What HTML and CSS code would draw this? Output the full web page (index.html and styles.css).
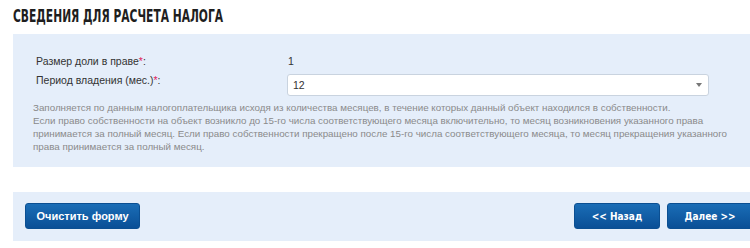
FILE: index.html
```html
<!DOCTYPE html>
<html lang="ru">
<head>
    <meta charset="UTF-8">
    <title>Сведения для расчета налога</title>
    <link rel="stylesheet" href="styles.css">
</head>
<body>
    <div class="page">
        <h1 class="title">Сведения для расчета налога</h1>

        <!-- Tax calculation details -->
        <div class="panel form-panel">
            <div class="row">
                <div class="label">Размер доли в праве<span class="req">*</span>:</div>
                <div class="value">1</div>
            </div>
            <div class="row">
                <div class="label label-select">Период владения (мес.)<span class="req">*</span>:</div>
                <div class="select">
                    <span>12</span>
                    <span class="arrow"></span>
                </div>
            </div>
            <div class="hint">
                Заполняется по данным налогоплательщика исходя из количества месяцев, в течение которых данный объект находился в собственности.<br>
                Если право собственности на объект возникло до 15-го числа соответствующего месяца включительно, то месяц возникновения указанного права<br>
                принимается за полный месяц. Если право собственности прекращено после 15-го числа соответствующего месяца, то месяц прекращения указанного права принимается за полный месяц.
            </div>
        </div>

        <!-- Buttons -->
        <div class="panel buttons">
            <button class="btn btn-clear">Очистить форму</button>
            <div class="nav">
                <button class="btn btn-nav">&lt;&lt; Назад</button>
                <button class="btn btn-nav">Далее &gt;&gt;</button>
            </div>
        </div>
    </div>
</body>
</html>
```

FILE: styles.css
```css
html, body {
    margin: 0;
    overflow: hidden;
    background-color: #fff;
}
body {
    font-family: "Liberation Sans", Arial, sans-serif;
    font-size: 10.5px;
    color: #333;
}
.page {
    width: 760px;
    padding: 7px 0 0 13px;
}
.title {
    margin: 0;
    height: 27px;
    font-family: "DejaVu Sans Condensed", sans-serif;
    font-weight: bold;
    font-size: 17px;
    line-height: 18px;
    text-transform: uppercase;
    color: #1e1e1e;
    white-space: nowrap;
    transform: scaleX(0.7);
    transform-origin: left center;
}
.panel {
    background-color: #e5eefa;
}
.form-panel {
    padding: 18px 0 16px 20px;
    height: 99px;
}
.row {
    display: grid;
    grid-template-columns: 251px 422px;
    align-items: start;
    padding-left: 3px;
}
.label, .value {
    line-height: 18px;
    color: #333;
}
.label-select {
    margin-top: 1px;
}
.req {
    color: #e0245e;
}
.value {
    padding-left: 1px;
}
.select {
    display: flex;
    justify-content: space-between;
    align-items: center;
    height: 20px;
    padding: 0 6px 0 5px;
    background-color: #fff;
    border: 1px solid #c9d3df;
    border-radius: 3px;
    color: #333;
    margin-top: 4px;
}
.arrow {
    width: 0;
    height: 0;
    border-left: 3px solid transparent;
    border-right: 3px solid transparent;
    border-top: 4px solid #777;
}
.hint {
    margin-top: 5px;
    width: 710px;
    font-size: 9.8px;
    line-height: 13px;
    color: #8a8a8a;
}
.buttons {
    display: flex;
    justify-content: space-between;
    margin-top: 25px;
    height: 49px;
    padding: 11px 20px 0 12px;
    box-sizing: border-box;
}
.btn {
    height: 26px;
    border: 1px solid #0b4f92;
    border-radius: 3px;
    background: linear-gradient(#1a6db6, #0a4f96);
    color: #fff;
    font-weight: bold;
    cursor: pointer;
}
.btn-clear {
    width: 115px;
    font-family: "Liberation Sans", Arial, sans-serif;
    font-size: 11px;
}
.nav {
    display: flex;
    gap: 7px;
}
.btn-nav {
    width: 86px;
    font-family: "DejaVu Sans Condensed", "DejaVu Sans", sans-serif;
    font-size: 10px;
}
```
